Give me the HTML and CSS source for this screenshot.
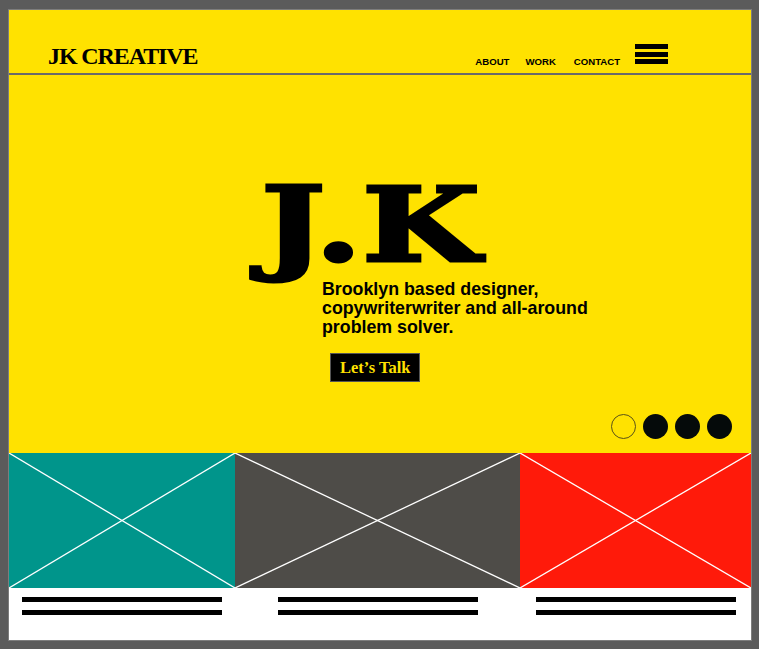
FILE: index.html
```html
<!DOCTYPE html>
<html lang="en">
<head>
<meta charset="utf-8">
<title>JK Creative</title>
<link rel="stylesheet" href="styles.css">
</head>
<body>
<div class="card">
  <header class="top">
    <div class="logo">JK CREATIVE</div>
    <nav class="nav">
      <a href="#">ABOUT</a>
      <a href="#" class="work-link">WORK</a>
      <a href="#" class="contact-link">CONTACT</a>
    </nav>
    <div class="burger"><span></span><span></span><span></span></div>
  </header>
  <section class="hero">
    <h1 class="mark">J.K</h1>
    <p class="tag">Brooklyn based designer,<br>copywriterwriter and all-around<br>problem solver.</p>
    <a href="#" class="cta">Let’s Talk</a>
    <div class="dots">
      <span class="dot dot-empty"></span>
      <span class="dot"></span>
      <span class="dot"></span>
      <span class="dot"></span>
    </div>
  </section>
  <section class="work">
    <div class="item">
      <div class="ph teal"><svg viewBox="0 0 100 100" preserveAspectRatio="none"><line x1="0" y1="0" x2="100" y2="100"/><line x1="100" y1="0" x2="0" y2="100"/></svg></div>
      <div class="txt"><i></i><i></i></div>
    </div>
    <div class="item">
      <div class="ph slate"><svg viewBox="0 0 100 100" preserveAspectRatio="none"><line x1="0" y1="0" x2="100" y2="100"/><line x1="100" y1="0" x2="0" y2="100"/></svg></div>
      <div class="txt"><i></i><i></i></div>
    </div>
    <div class="item">
      <div class="ph red"><svg viewBox="0 0 100 100" preserveAspectRatio="none"><line x1="0" y1="0" x2="100" y2="100"/><line x1="100" y1="0" x2="0" y2="100"/></svg></div>
      <div class="txt"><i></i><i></i></div>
    </div>
  </section>
</div>
</body>
</html>
```
FILE: styles.css
```css
* { box-sizing: border-box; }
html, body { margin: 0; padding: 0; }
body {
  background: #5b5b5b;
  padding: 9px 0 0 8px;
  height: 649px;
  overflow: hidden;
}
.card {
  width: 744px;
  height: 632px;
  border: 1px solid #7d7d7d;
  background: #ffe200;
  display: flex;
  flex-direction: column;
}
.top {
  height: 65px;
  flex: 0 0 65px;
  border-bottom: 2px solid #6a6a6a;
  display: flex;
  align-items: flex-end;
  padding: 0 83px 5px 39px;
}
.logo {
  font-family: "Liberation Serif", "Times New Roman", serif;
  font-weight: 700;
  font-size: 24px;
  line-height: 24px;
  letter-spacing: -1.1px;
  color: #000;
}
.nav {
  margin-left: auto;
  margin-bottom: 1px;
  display: flex;
  font-family: "Liberation Sans", Arial, sans-serif;
  font-weight: 700;
  font-size: 9.6px;
  line-height: 10px;
}
.nav a { color: #000; text-decoration: none; }
.work-link { margin-left: 16px; }
.contact-link { margin-left: 18px; }
.burger {
  margin-left: 15px;
  margin-bottom: 4px;
  width: 33px;
  display: flex;
  flex-direction: column;
  gap: 2.5px;
}
.burger span { display: block; height: 5px; background: #000; }

.hero {
  flex: 0 0 378px;
  display: flex;
  flex-direction: column;
  align-items: flex-start;
  padding: 85px 19px 14px 0;
}
.mark {
  margin: 0 0 0 252px;
  height: 130px;
  font-family: "DejaVu Serif", serif;
  font-weight: 700;
  font-size: 103px;
  line-height: 130px;
  letter-spacing: 0;
  -webkit-text-stroke: 3px #000;
  color: #000;
  transform: scaleX(1.32);
  transform-origin: left top;
}
.tag {
  position: relative;
  margin: -10px 0 0 313px;
  font-family: "Liberation Sans", Arial, sans-serif;
  font-weight: 700;
  font-size: 17.8px;
  line-height: 19px;
  color: #000;
}
.cta {
  margin: 16px 0 0 321px;
  display: block;
  height: 29px;
  padding: 0 9px;
  background: #000;
  border: 1px solid #555;
  color: #ffe200;
  text-decoration: none;
  font-family: "Liberation Serif", "Times New Roman", serif;
  font-weight: 700;
  font-size: 16.5px;
  line-height: 27px;
}
.dots {
  margin-top: auto;
  align-self: flex-end;
  display: flex;
  gap: 7px;
}
.dot {
  width: 25px;
  height: 25px;
  border-radius: 50%;
  background: #050a0a;
}
.dot-empty {
  background: transparent;
  border: 1px solid #5a5218;
}

.work {
  flex: 1 1 auto;
  display: grid;
  grid-template-columns: 226px 285px 1fr;
  background: #fff;
}
.ph {
  height: 135px;
}
.ph svg { display: block; width: 100%; height: 100%; }
.ph line { stroke: #fff; stroke-width: 1.3; vector-effect: non-scaling-stroke; }
.teal { background: #00958b; }
.slate { background: #4e4c48; }
.red { background: #ff1a0a; }
.txt {
  display: flex;
  flex-direction: column;
  align-items: center;
  gap: 8px;
  padding-top: 9px;
}
.txt i { display: block; width: 200px; height: 5px; background: #000; }
```
